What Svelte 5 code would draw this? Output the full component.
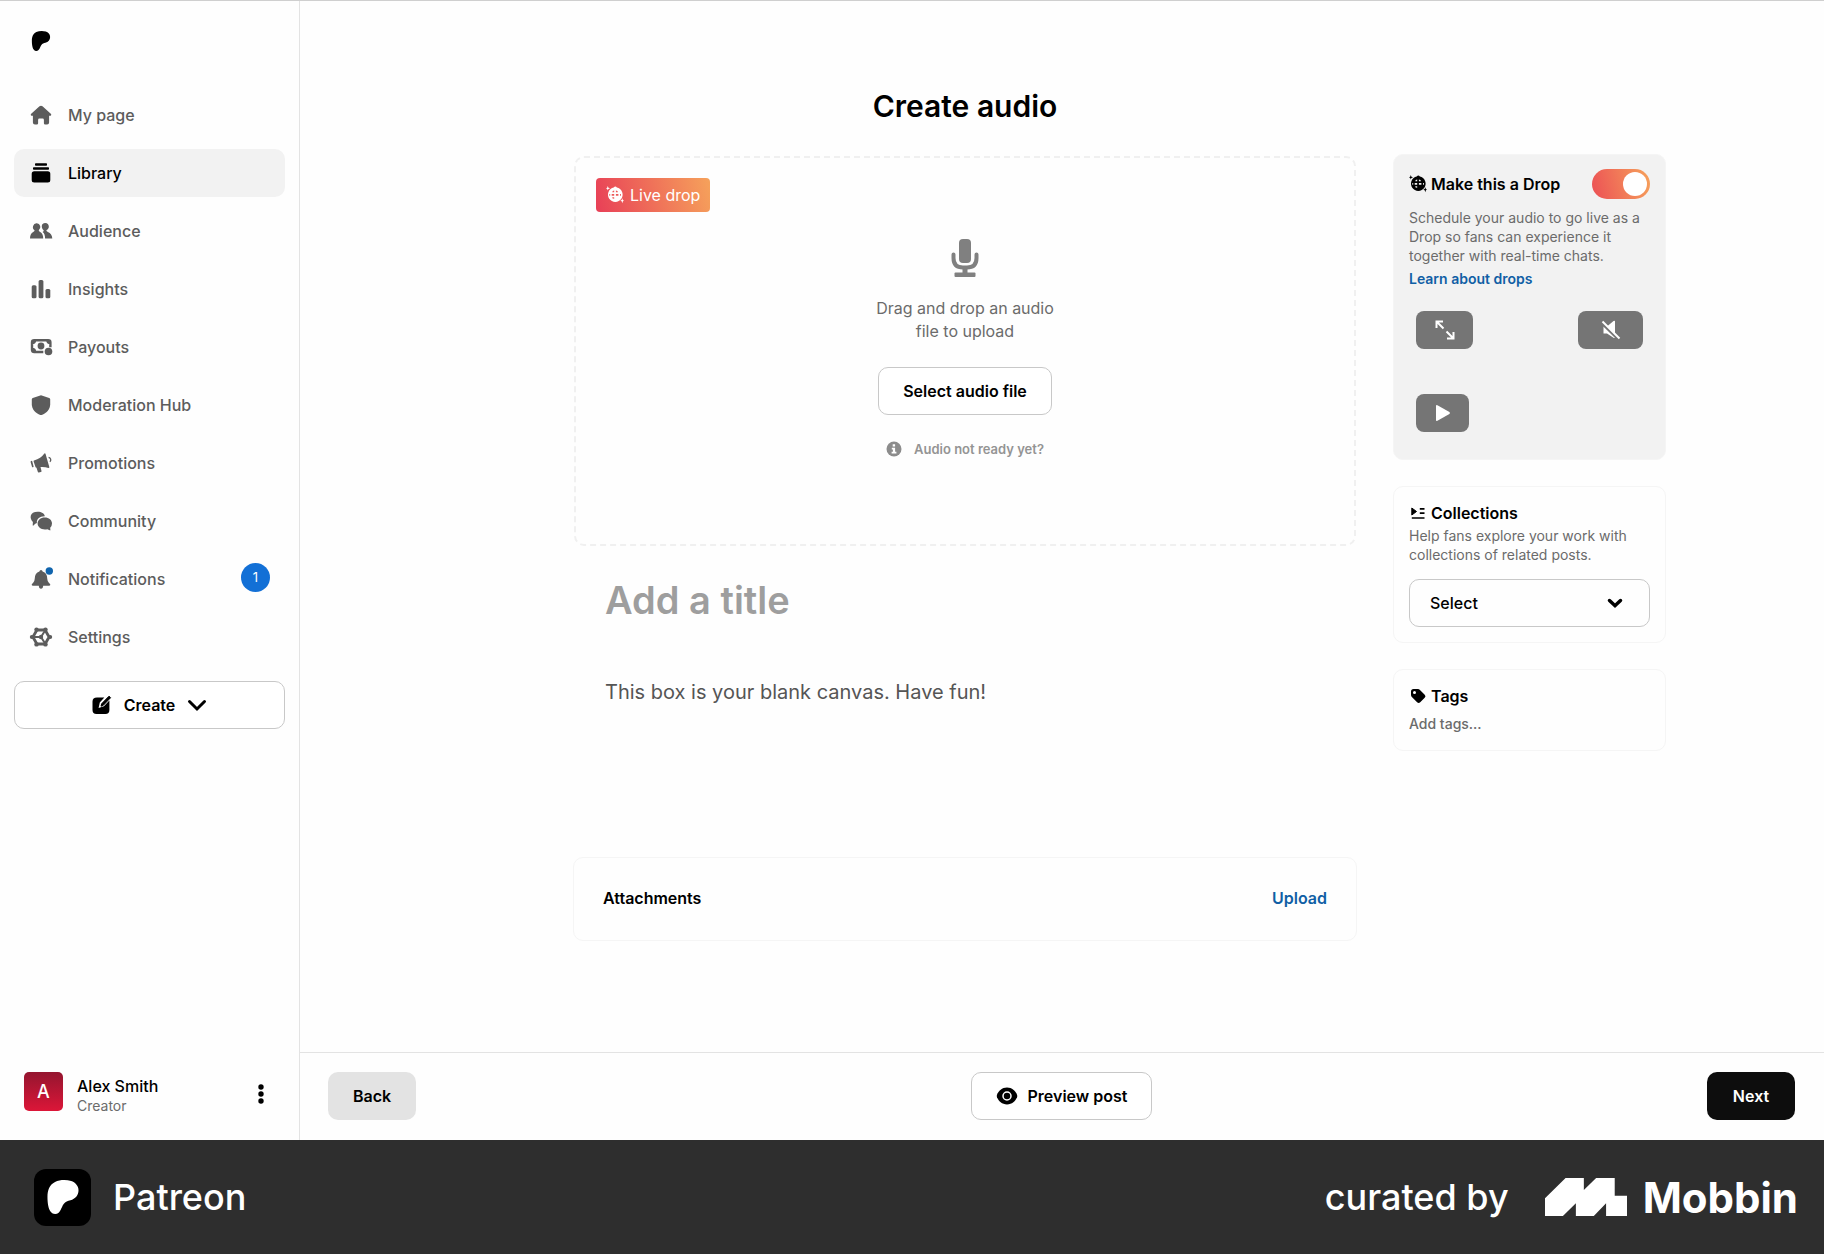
<script>
  const nav = [
    { id: 'home', label: 'My page' },
    { id: 'library', label: 'Library', active: true },
    { id: 'audience', label: 'Audience' },
    { id: 'insights', label: 'Insights' },
    { id: 'payouts', label: 'Payouts' },
    { id: 'shield', label: 'Moderation Hub' },
    { id: 'promo', label: 'Promotions' },
    { id: 'community', label: 'Community' },
    { id: 'bell', label: 'Notifications', badge: 1 },
    { id: 'settings', label: 'Settings' }
  ];
  let isDrop = $state(true);
  let title = $state('');
  let body = $state('');
  let tags = $state('');
</script>

{#snippet patreonMark()}
  <path d="M22.957 7.21c-.004-3.064-2.391-5.576-5.191-6.482-3.478-1.125-8.064-.962-11.384.604C2.357 3.231 1.093 7.391 1.046 11.54c-.039 3.411.302 12.396 5.369 12.46 3.765.047 4.326-4.804 6.068-7.141 1.24-1.662 2.836-2.132 4.801-2.618 3.376-.836 5.678-3.501 5.673-7.031Z" />
{/snippet}

{#snippet discoBall()}
  <svg class="disco" viewBox="0 0 18 18" aria-hidden="true">
    <path fill="currentColor" d="M1.800 0l.6 1.700 1.700.6-1.700.6-.6 1.700-.6-1.700L0 2.300l1.200-.6zM16.300 12.200l.6 1.900 1.100.6-1.100.6-.6 1.900-.6-1.900-1.400-.6 1.400-.6z" />
    <path fill="currentColor" d="M7.700 1.500Q9.300-.4 10.900 1.500A7.300 7.300 0 1 1 7.700 1.500z" />
    <g class="facets">
      <path d="M6.700 4.900l1.500-.3v1.700H6.300zM9.900 4.600l1.600.3.400 1.400h-2zM5.700 7.900h2.500v1.800H5.700zM9.900 7.900h2.500v1.800H9.900zM8.200 11.300v1.500l-1.600-.4-.4-1.100zM14 7.900h.9v1.800H14zM3.300 7.900h.9v1.800h-.9z" />
    </g>
  </svg>
{/snippet}

{#snippet navIcon(id)}
  <svg class="nav-icon" viewBox="0 0 24 24" fill="currentColor" aria-hidden="true">
    {#if id === 'home'}
      <path d="M10.500 3.300q1.500-1.100 3 0l8.300 7.400q.8.800.3 1.500-.4.500-1.200.5h-.8v6.800q0 2-2 2h-1.900q-1.300 0-1.300-1.300v-3.300q0-1.300-1.300-1.300h-3.200q-1.300 0-1.300 1.300v3.300q0 1.300-1.300 1.300H5.900q-2 0-2-2v-6.800h-.8q-.8 0-1.200-.5-.5-.7.3-1.500z" />
    {:else if id === 'library'}
      <rect x="6" y="2.300" width="12" height="2.500" rx=".8" />
      <rect x="4" y="6.200" width="16" height="2.500" rx=".8" />
      <rect x="2.700" y="10.200" width="18.600" height="11.200" rx="2.500" />
    {:else if id === 'audience'}
      <path d="M7.700 4.300a3.600 3.800 0 0 1 2 7q.1 1 1.500 1.600 3 1.500 3 6.600H1q0-5.100 3.200-6.600 1.300-.6 1.400-1.600a3.600 3.800 0 0 1 2.100-7z" />
      <path d="M13 5.700a3.700 3.800 0 1 1 4.300 5.600q.2 1 1.600 1.600 4.100 1.600 4.400 6.600h-7.200q0-4.700-2.500-6.600 1.300-.6 1.100-1.600-2.600-2.200-1.700-5.600z" />
    {:else if id === 'insights'}
      <rect x="2.700" y="8.300" width="4.800" height="13" rx="1.500" />
      <rect x="9.600" y="3" width="4.800" height="18.300" rx="1.500" />
      <rect x="16.500" y="12" width="4.800" height="9.300" rx="1.500" />
    {:else if id === 'payouts'}
      <path fill="none" stroke="currentColor" stroke-width="2.400" d="M14.300 17H5.200q-2.200 0-2.200-2V7.300q0-2 2.200-2h14q2.200 0 2.200 2v5M6 5.300q0 2.800-3 2.800M3 14q3 0 3 3M18.400 5.300q0 2.800 3 2.800" />
      <circle cx="12" cy="11" r="3.400" />
      <circle cx="19.500" cy="16.500" r="3.800" />
    {:else if id === 'shield'}
      <path d="M12 2.200l8.200 2.900q1 .4 1 1.500v4.600c0 5.200-3.600 8.600-7.900 10.600q-1.300.6-2.600 0C6.400 19.800 2.800 16.400 2.800 11.200V6.600q0-1.100 1-1.500z" />
    {:else if id === 'promo'}
      <path d="M5 9.500Q12 7.300 15.400 2.500q.7-.6 1.100.2l3.800 13.400q.2 1-.8 1-4-1.600-8-1.100l1 3.900q.2 1-.7 1.200l-1.900.4q-.9.200-1.100-.7L7.500 16.700q-.8 0-1-.8L4.600 10.400q-.1-.7.4-.9zM2.300 9.900q.8-.2 1 .5l1.300 5q.1.700-.6.900-.8.200-1-.6L1.600 10.900q-.1-.8.700-1z" />
      <path fill="none" stroke="currentColor" stroke-width="1.300" d="M19.600 6.300a2.600 2.600 0 0 1 1.300 4.500" />
    {:else if id === 'community'}
      <path d="M8.700 2.800c3.900 0 6.600 1.800 7.200 4.400-5.300-.2-8.600 3.200-8 6.700q-1.500.3-3.500 2.700-.6.500-.7-.3l.2-3.400C.2 9.500.6 2.800 8.700 2.800z" />
      <path d="M15.700 8.600c4.300 0 7.300 2.600 7.300 6q0 2.600-1.800 4.200l.2 2.100q0 .7-.7.400l-2.400-1.100c-5.200 1.200-9.700-1.700-9.700-5.600 0-3.300 2.900-6 7.100-6z" />
    {:else if id === 'bell'}
      <path d="M12 3q1.400 0 1.600 1.500 4.600 1.100 4.700 7.500.1 2.500 1.700 4 1.500 1.100 1.300 2.100-.2.700-1.300.7h-5.800q-.2 2.900-2.200 2.900t-2.200-2.900H4q-1.100 0-1.300-.7-.2-1 1.300-2.100 1.600-1.500 1.700-4 .1-6.400 4.700-7.500Q10.600 3 12 3z" />
      <circle class="dot" cx="20.300" cy="4" r="3.700" />
    {:else if id === 'settings'}
      <path fill="none" stroke="currentColor" stroke-width="2.800" stroke-linejoin="round" d="M7.900 5h8.200l4 7-4 7H7.900l-4-7z" />
      <path fill="none" stroke="currentColor" stroke-width="2" d="M4 12h6.500M12 12l3.800-6M12 12l3.800 6" />
      <circle cx="7.500" cy="4.600" r="2.200" /><circle cx="16.500" cy="4.600" r="2.200" />
      <circle cx="21.200" cy="12" r="2" /><circle cx="16.500" cy="19.400" r="2.200" />
      <circle cx="7.500" cy="19.400" r="2.200" /><circle cx="2.800" cy="12" r="2" />
      <circle cx="12" cy="12" r="2.200" />
    {/if}
  </svg>
{/snippet}

<div class="page">
  <div class="app">
    <aside class="sidebar">
      <a class="logo" href="#home" aria-label="Patreon">
        <svg viewBox="0 0 24 24" width="20" height="20" aria-hidden="true">{@render patreonMark()}</svg>
      </a>
      <nav>
        {#each nav as item (item.id)}
          <a class="nav-item" class:active={item.active} href={'#' + item.id}>
            {@render navIcon(item.id)}
            <span>{item.label}</span>
            {#if item.badge}<span class="badge">{item.badge}</span>{/if}
          </a>
        {/each}
      </nav>
      <button class="btn outline create" type="button">
        <svg viewBox="0 0 20 20" width="20" height="20" aria-hidden="true">
          <path d="M5 2.500h7.300L7.800 7.600 6.600 13l5.300-1.700 5.500-5.800V15q0 4-4 4H4.500q-4 0-4-4V6.500q0-4 4.500-4z" />
          <path d="M17 1.200l1.600 1.500-7.300 7.600-2.300.9.700-2.500z" stroke="#000" stroke-width="1" stroke-linejoin="round" />
        </svg>
        <span>Create</span>
        <svg viewBox="0 0 20 20" width="20" height="20" aria-hidden="true">
          <path d="M2.500 6.500l7.500 7.500 7.500-7.500" fill="none" stroke="#000" stroke-width="3" stroke-linecap="round" />
        </svg>
      </button>
      <div class="user">
        <span class="avatar">A</span>
        <div class="who">
          <strong>Alex Smith</strong>
          <span>Creator</span>
        </div>
        <button class="more" type="button" aria-label="Account menu">
          <svg viewBox="0 0 6 20" width="6" height="20" aria-hidden="true">
            <circle cx="3" cy="3" r="2.700" /><circle cx="3" cy="10" r="2.700" /><circle cx="3" cy="17" r="2.700" />
          </svg>
        </button>
      </div>
    </aside>

    <div class="workspace">
      <main>
        <div class="editor">
          <h1>Create audio</h1>
          <section class="dropzone">
            <span class="live">{@render discoBall()}Live drop</span>
            <div class="upload">
              <svg class="mic" viewBox="0 0 28 40" width="28" height="40" aria-hidden="true">
                <rect x="8" y="1" width="12" height="24" rx="4" />
                <path d="M2.500 16.500v3.500q0 9.500 9.500 9.500h4q9.500 0 9.500-9.500v-3.500" fill="none" stroke="#808080" stroke-width="4" stroke-linecap="round" />
                <rect x="11.500" y="30" width="5" height="6" />
                <rect x="3.500" y="34.500" width="21" height="4.500" rx="1" />
              </svg>
              <p>Drag and drop an audio<br />file to upload</p>
              <button class="btn outline" type="button">Select audio file</button>
              <button class="hint" type="button">
                <svg viewBox="0 0 16 16" width="16" height="16" aria-hidden="true">
                  <circle cx="8" cy="8" r="7.500" fill="#8c8c8c" />
                  <path d="M6.700 3.200h2.400v2.200H6.700zM5.800 6.700h3.300v4h1.300v1.800H5.600v-1.800h1.300V8.400H5.800z" fill="#fff" />
                </svg>
                Audio not ready yet?
              </button>
            </div>
          </section>
          <input class="title" aria-label="Title" placeholder="Add a title" bind:value={title} />
          <textarea class="body" aria-label="Post body" placeholder="This box is your blank canvas. Have fun!" bind:value={body}></textarea>
          <section class="attachments">
            <strong>Attachments</strong>
            <button type="button">Upload</button>
          </section>
        </div>

        <div class="options">
          <section class="card drop">
            <div class="card-title">
              {@render discoBall()}
              <label for="drop-toggle">Make this a Drop</label>
              <input id="drop-toggle" class="toggle" type="checkbox" role="switch" bind:checked={isDrop} />
            </div>
            <p>Schedule your audio to go live as a Drop so fans can experience it together with real-time chats.</p>
            <a href="#drops">Learn about drops</a>
            <div class="player">
              <div class="player-row">
                <button class="expand" type="button" aria-label="Full screen">
                  <svg viewBox="0 0 20 20" width="20" height="20" aria-hidden="true">
                    <path d="M1.500 8V1.500H8M2 2l6.500 6.500M18.500 12v6.500H12M18 18l-6.500-6.500" fill="none" stroke="#fff" stroke-width="2" />
                  </svg>
                </button>
                <button class="mute" type="button" aria-label="Unmute">
                  <svg viewBox="0 0 20 20" width="20" height="20" aria-hidden="true">
                    <path d="M2.500 6.500H6L12.500 1q1.500-.8 1.500.5v15.700q0 1.300-1.500.5L6 13.500H2.500z" fill="#fff" />
                    <path d="M.5 3l16.500 16" stroke="#757575" stroke-width="2.500" />
                    <path d="M1.500 1.500l17 17" stroke="#fff" stroke-width="2" />
                  </svg>
                </button>
              </div>
              <button class="play" type="button" aria-label="Play">
                <svg viewBox="0 0 16 18" width="16" height="18" aria-hidden="true">
                  <path d="M1 2q0-1.500 1.400-.8l12 6.800q1.200 1 0 2l-12 6.800Q1 17.500 1 16z" fill="#fff" />
                </svg>
              </button>
            </div>
          </section>

          <section class="card collections">
            <div class="card-title">
              <svg viewBox="0 0 18 18" width="18" height="18" aria-hidden="true">
                <path d="M2.800 4l4.700 3.500-4.700 3.500z" stroke="#000" stroke-linejoin="round" />
                <path d="M10.800 4.900h4.700M10.800 9.200h4.700M2.800 14h12.700" stroke="#000" stroke-width="1.700" />
              </svg>
              <label for="collection">Collections</label>
            </div>
            <p>Help fans explore your work with collections of related posts.</p>
            <div class="select">
              <select id="collection"><option>Select</option></select>
              <svg viewBox="0 0 16 16" width="16" height="16" aria-hidden="true">
                <path d="M2.500 5.500L8 10.700l5.500-5.200" fill="none" stroke="#000" stroke-width="3.500" stroke-linecap="round" />
              </svg>
            </div>
          </section>

          <section class="card tags">
            <div class="card-title">
              <svg viewBox="0 0 18 18" width="18" height="18" aria-hidden="true">
                <path fill-rule="evenodd" d="M4.500 2H9q1 0 1.700.7l5 5q1.600 1.600 0 3.100l-4.500 4.500q-1.500 1.500-3.100 0l-5-5Q2 9.200 2 8V4.500Q2 2 4.500 2zM5.500 4a1.500 1.500 0 1 0 0 3 1.500 1.500 0 0 0 0-3z" />
              </svg>
              <label for="tags">Tags</label>
            </div>
            <input id="tags" placeholder="Add tags..." bind:value={tags} />
          </section>
        </div>
      </main>

      <div class="actions">
        <button class="btn soft" type="button">Back</button>
        <button class="btn outline" type="button">
          <svg viewBox="0 0 22 18" width="22" height="18" aria-hidden="true">
            <path d="M11 .5c5 0 8.500 3.500 10 7.200q.5 1.300 0 2.600c-1.500 3.700-5 7.200-10 7.200S2.500 14 1 10.300q-.5-1.300 0-2.600C2.500 4 6 .5 11 .5z" />
            <circle cx="11" cy="9" r="4" fill="none" stroke="#fff" stroke-width="1.500" />
          </svg>
          Preview post
        </button>
        <button class="btn solid" type="button">Next</button>
      </div>
    </div>
  </div>

  <footer>
    <span class="tile"><svg viewBox="0 0 24 24" width="34" height="34" fill="#fff" aria-hidden="true">{@render patreonMark()}</svg></span>
    <span class="brand">Patreon</span>
    <span class="curated">curated by</span>
    <svg viewBox="735 414 247 114" width="82" height="38" fill="#fff" aria-hidden="true">
      <path d="M735 475l62-61h55v36l37-36h56v53h37v61h-63v-38l-37 38h-54v-38l-39 38h-54z" />
    </svg>
    <span class="mobbin">Mobbin</span>
  </footer>
</div>

<style>
  :global(body) { margin: 0; }
  :global(*) { box-sizing: border-box; }
  .page {
    min-height: 100vh;
    display: flex;
    flex-direction: column;
    background: #fefefe;
    color: #000;
    font-family: Inter, "Liberation Sans", sans-serif;
    font-size: 16px;
  }
  button, input, textarea, select { font: inherit; color: inherit; }
  button { cursor: pointer; border: 0; background: none; padding: 0; }
  a { text-decoration: none; }
  svg { flex: none; }
  p, h1 { margin: 0; }
  .app { flex: 1; display: flex; border-top: 1px solid #cfcfcf; }

  .sidebar {
    width: 300px;
    flex: none;
    display: flex;
    flex-direction: column;
    padding: 30px 14px 24px;
    border-right: 1px solid #e3e3e3;
  }
  .logo { display: flex; margin: 0 0 40px 17px; color: #000; }
  nav { display: flex; flex-direction: column; gap: 10px; margin-bottom: 20px; }
  .nav-item {
    height: 48px;
    display: flex;
    align-items: center;
    gap: 15px;
    padding: 0 15px;
    border-radius: 10px;
    color: #5c5c5c;
    font-weight: 500;
  }
  .nav-item.active { background: #f2f2f2; color: #000; }
  .nav-icon { width: 24px; height: 24px; }
  .nav-icon .dot { fill: #1064ad; }
  .badge {
    margin: 0 0 4px auto;
    width: 29px;
    height: 29px;
    border-radius: 50%;
    display: grid;
    place-items: center;
    background: #1370d6;
    color: #fff;
    font-size: 13px;
    font-weight: 400;
  }
  .btn {
    height: 48px;
    display: flex;
    align-items: center;
    justify-content: center;
    gap: 10px;
    padding: 0 24px;
    border-radius: 10px;
    font-weight: 600;
  }
  .outline { border: 1px solid #c8c8c8; background: #fff; }
  .soft { background: #e3e3e3; }
  .solid { background: #0d0d0d; color: #fff; }
  .create { gap: 12px; }
  .user { margin-top: auto; display: flex; align-items: flex-start; gap: 14px; padding: 0 21px 0 10px; }
  .avatar {
    width: 39px;
    height: 39px;
    border-radius: 5px;
    display: grid;
    place-items: center;
    color: #fff;
    font-size: 18px;
    font-weight: 500;
    background: linear-gradient(#94152f, #dc1638);
  }
  .who { display: flex; flex-direction: column; line-height: 20px; padding-top: 4px; }
  .who strong { font-weight: 500; }
  .who span { font-size: 14px; color: #6b6b6b; }
  .more { margin-left: auto; padding-top: 12px; display: flex; }

  .workspace { flex: 1; min-width: 0; display: flex; flex-direction: column; }
  main {
    flex: 1;
    display: grid;
    grid-template-columns: minmax(0, 1fr) 273px;
    column-gap: 36px;
    padding: 85px 158px 0 273px;
  }
  .editor { display: flex; flex-direction: column; }
  h1 { text-align: center; font-size: 30px; line-height: 40px; font-weight: 600; margin-bottom: 28px; }
  .dropzone {
    min-height: 390px;
    margin: 2px 1px 0;
    border: 2px dashed #f0f0f0;
    border-radius: 10px;
    padding: 20px;
  }
  .live {
    width: fit-content;
    height: 34px;
    display: flex;
    align-items: center;
    gap: 6px;
    padding: 0 10px;
    border-radius: 4px;
    background: linear-gradient(75deg, #e83f57, #f6a25b);
    color: #fff;
    --facet: #ec5a58;
  }
  .disco { width: 18px; height: 18px; }
  .facets { fill: var(--facet); }
  .upload { display: flex; flex-direction: column; align-items: center; padding-top: 26px; }
  .mic { fill: #808080; }
  .upload p { margin: 19px 0 24px; text-align: center; line-height: 23px; color: #6b6b6b; }
  .hint {
    margin-top: 24px;
    display: flex;
    align-items: center;
    gap: 12px;
    color: #949494;
    font-size: 13px;
    line-height: 20px;
    font-weight: 600;
  }
  .title, .body, .tags input { border: 0; outline: 0; padding: 0; background: none; min-width: 0; }
  .title { margin: 29px 32px 0; height: 50px; font-size: 38px; font-weight: 600; }
  .title::placeholder { color: #9e9e9e; opacity: 1; }
  .body { margin: 53px 32px 0; height: 130px; font-size: 20px; line-height: 28px; resize: none; }
  .body::placeholder { color: #555; opacity: 1; }
  .attachments {
    margin-top: 49px;
    height: 84px;
    display: flex;
    align-items: center;
    justify-content: space-between;
    padding: 0 29px 2px;
    border: 1px solid #f5f5f5;
    border-radius: 10px;
  }
  .attachments strong { font-weight: 600; }
  .attachments button { color: #105fa5; font-weight: 600; }

  .options { display: flex; flex-direction: column; gap: 26px; padding-top: 68px; }
  .card { border: 1px solid #f5f5f5; border-radius: 10px; padding: 15px; }
  .card-title { display: flex; align-items: center; gap: 4px; line-height: 22px; font-weight: 600; }
  .card p { font-size: 14px; line-height: 19px; color: #6b6b6b; }
  .drop { background: #f2f2f2; padding-top: 14px; --facet: #f2f2f2; min-height: 306px; }
  .card.drop p { margin: 9px 0 4px; }
  .drop a { display: block; font-size: 14px; line-height: 19px; font-weight: 600; color: #105fa5; }
  .toggle {
    appearance: none;
    margin: 0 0 0 auto;
    width: 58px;
    height: 30px;
    padding: 3px;
    display: flex;
    border-radius: 15px;
    background: #b5b5b5;
  }
  .toggle::before { content: ''; width: 24px; height: 24px; border-radius: 50%; background: #fff; }
  .toggle:checked { justify-content: flex-end; background: linear-gradient(75deg, #ec5055, #f6a25b); }
  .player { padding: 23px 7px 0; display: flex; flex-direction: column; gap: 45px; }
  .player-row { display: flex; justify-content: space-between; }
  .player button { height: 38px; display: grid; place-items: center; border-radius: 8px; background: #757575; }
  .expand { width: 57px; }
  .mute { width: 65px; }
  .player .play { width: 53px; }
  .collections p { margin-top: 2px; }
  .select { display: grid; grid-template-columns: 1fr 16px; align-items: center; margin-top: 15px; padding-right: 26px; border: 1px solid #c8c8c8; border-radius: 10px; height: 48px; }
  select { appearance: none; grid-row: 1; grid-column: 1 / 3; height: 46px; border: 0; outline: 0; background: none; padding: 0 20px; font-weight: 500; }
  .select svg { grid-row: 1; grid-column: 2; pointer-events: none; }
  .tags input { width: 100%; height: 20px; font-size: 14px; font-weight: 500; margin: 6px 0 2px; display: block; }
  .tags input::placeholder { color: #6b6b6b; opacity: 1; }

  .actions {
    display: grid;
    grid-template-columns: 1fr auto 1fr;
    align-items: center;
    padding: 19px 29px 20px 28px;
    border-top: 1px solid #e3e3e3;
  }
  .actions .btn { justify-self: start; min-width: 88px; }
  .actions .solid { justify-self: end; }

  footer {
    height: 114px;
    flex: none;
    display: flex;
    align-items: center;
    padding: 0 26px 0 34px;
    background: #2e2e2e;
    color: #fff;
    font-size: 36px;
    font-weight: 500;
  }
  .tile { width: 57px; height: 57px; display: grid; place-items: center; border-radius: 12px; background: #000; }
  .brand { margin-left: 22px; }
  .curated { margin: 0 36px 0 auto; }
  .mobbin { margin-left: 16px; font-size: 42px; font-weight: 700; }
</style>
